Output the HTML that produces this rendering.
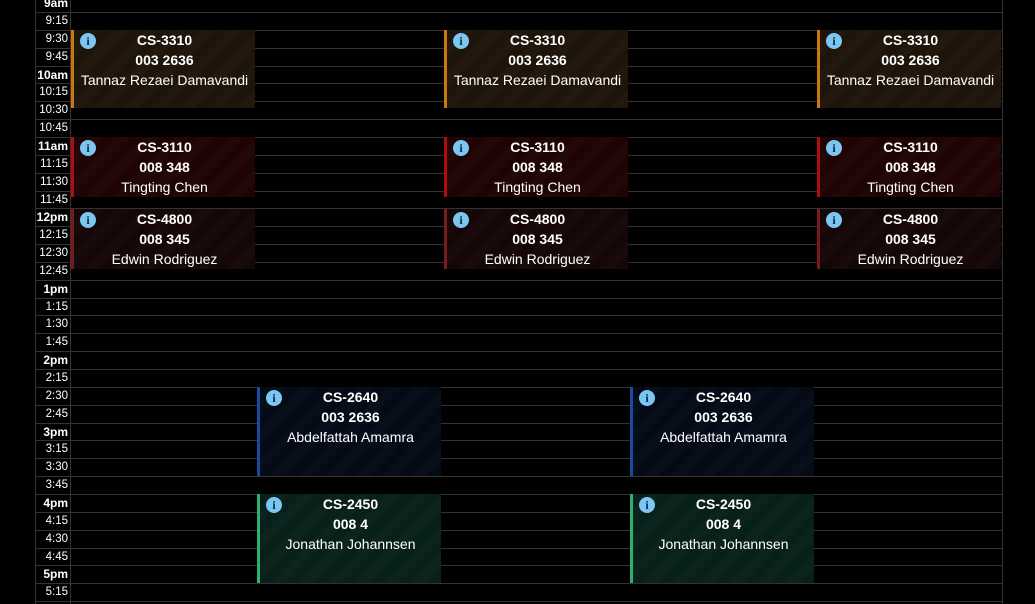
<html><head><style>
body{margin:0;background:#000;width:1035px;height:604px;overflow:hidden;position:relative;font-family:"Liberation Sans",Arial,sans-serif}
.l{position:absolute;left:36px;width:967px;height:1px;background:#333}
.t{position:absolute;left:36px;width:32px;text-align:right;color:#fff;font-size:11.5px;line-height:18px}
.t.b{font-weight:bold;font-size:12px}
.e{position:absolute;width:184px;color:#fff;text-align:center;font-size:14px;line-height:20px;box-sizing:border-box}
.e b{display:block}
.i{position:absolute;left:6px;top:3px;width:16px;height:16px;border-radius:50%;background:#7cc6f2;color:#0a2a40;font-size:12px;font-weight:bold;line-height:16px;text-align:center;font-family:"Liberation Serif",serif}
</style></head><body>
<div style="position:absolute;left:35px;top:0;width:1px;height:604px;background:#333"></div>
<div style="position:absolute;left:70px;top:0;width:1px;height:604px;background:#333"></div>
<div style="position:absolute;left:1002px;top:0;width:1px;height:604px;background:#333"></div>
<div id="g"></div>
<script>
var g=document.getElementById('g'),h='';
var labels=['9am','9:15','9:30','9:45','10am','10:15','10:30','10:45','11am','11:15','11:30','11:45','12pm','12:15','12:30','12:45','1pm','1:15','1:30','1:45','2pm','2:15','2:30','2:45','3pm','3:15','3:30','3:45','4pm','4:15','4:30','4:45','5pm','5:15'];
for(var k=0;k<labels.length;k++){var y=-5.85+k*17.85;h+='<div class="l" style="top:'+Math.round(y+17.85)+'px"></div>';h+='<div class="t'+(labels[k].match(/m$/)?' b':'')+'" style="top:'+Math.round(y)+'px">'+labels[k]+'</div>';}
var ev=[
[30,78,'#c8780f','#1e1409','CS-3310','003 2636','Tannaz Rezaei Damavandi',[71,444,817]],
[137,60,'#b00d0d','#200404','CS-3110','008 348','Tingting Chen',[71,444,817]],
[209,60,'#7a1a1a','#150707','CS-4800','008 345','Edwin Rodriguez',[71,444,817]],
[387,89,'#1a4aa0','#050b16','CS-2640','003 2636','Abdelfattah Amamra',[257,630]],
[494,89,'#2fb070','#08201a','CS-2450','008 4','Jonathan Johannsen',[257,630]]];
ev.forEach(function(e){e[7].forEach(function(x){
h+='<div class="e" style="left:'+x+'px;top:'+e[0]+'px;height:'+e[1]+'px;border-left:3px solid '+e[2]+';background:repeating-linear-gradient(135deg,rgba(255,255,255,0) 0 10px,rgba(255,255,255,0.015) 10px 20px),'+e[3]+'"><span class="i">i</span><b>'+e[4]+'</b><b>'+e[5]+'</b><span>'+e[6]+'</span></div>';});});
g.innerHTML=h;
</script>
</body></html>
